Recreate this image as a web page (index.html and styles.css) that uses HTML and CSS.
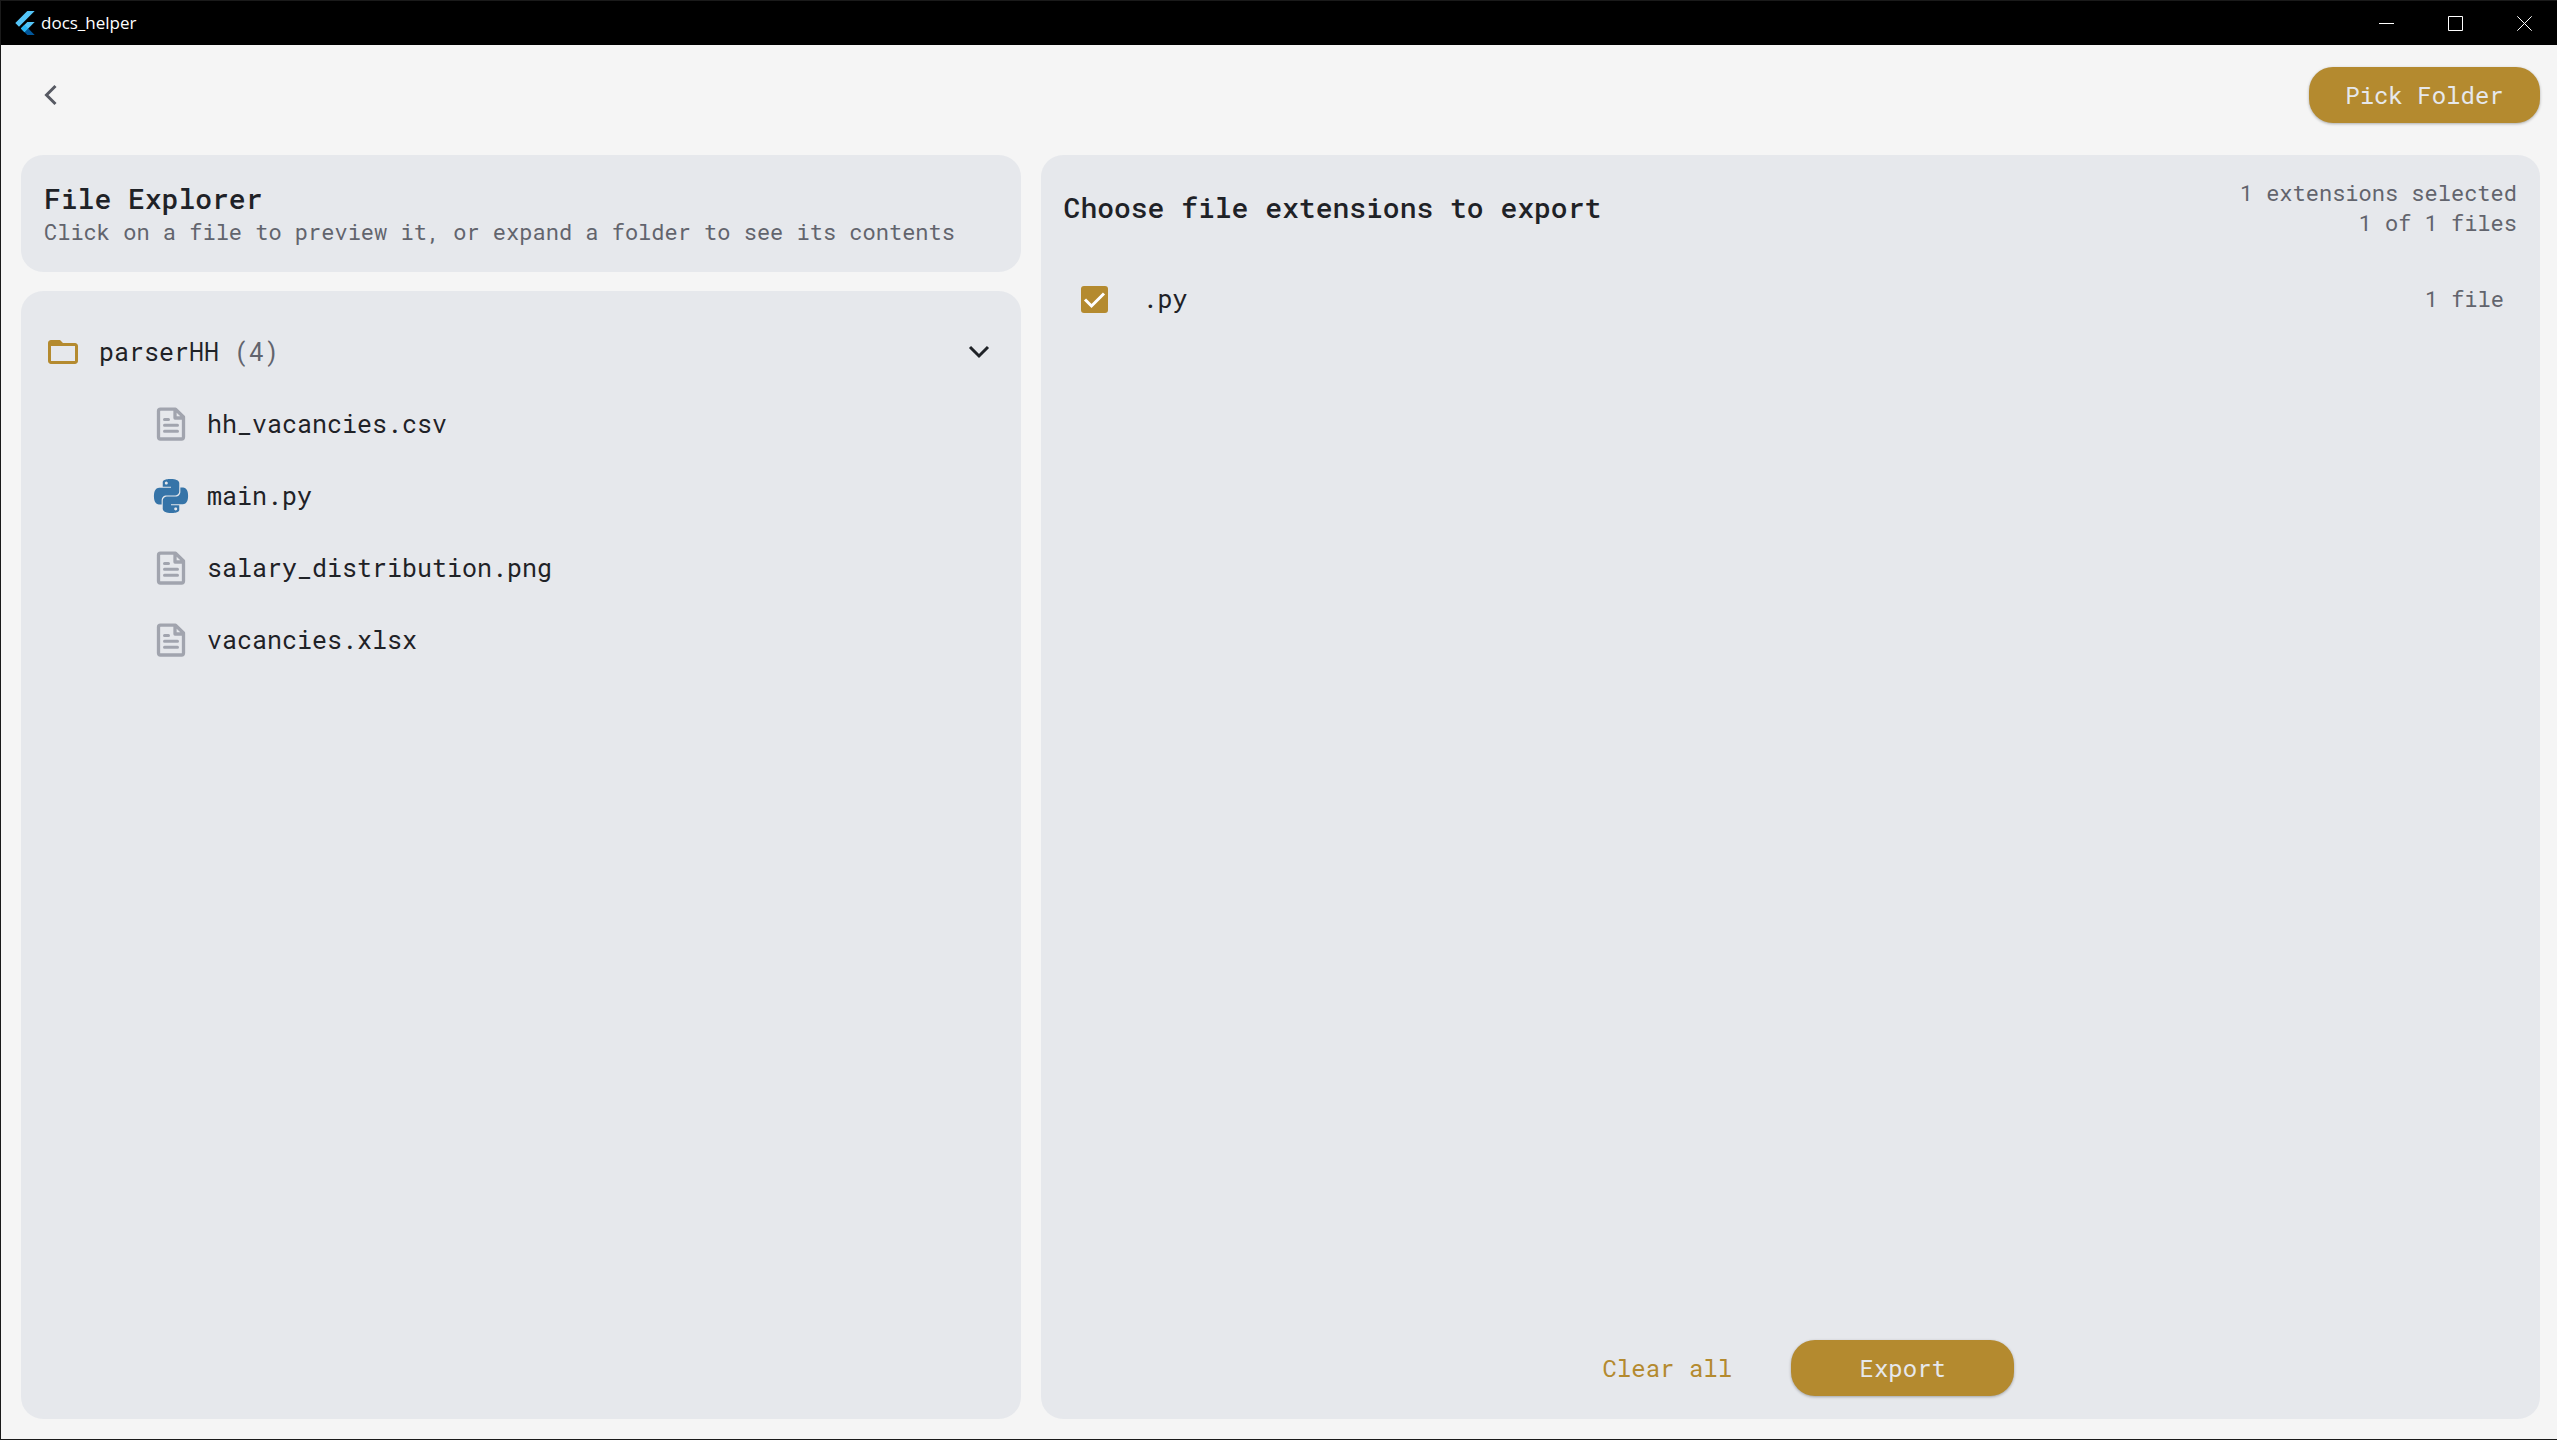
FILE: index.html
```html
<!DOCTYPE html>
<html lang="en">
<head>
<meta charset="utf-8">
<title>docs_helper</title>
<link rel="stylesheet" href="styles.css">
</head>
<body>
<svg class="defs" aria-hidden="true">
  <symbol id="doc" viewBox="0 0 36 36">
    <path d="M7.500 3.200H22.500L30.500 11V31Q30.500 33 28.500 33H7.500Q5.500 33 5.500 31V5.200Q5.500 3.200 7.500 3.200Z M22 3.500V12H30" fill="none" stroke="currentColor" stroke-width="3.300" stroke-linejoin="round"/>
    <path d="M11.500 13.500H15.500M11.500 19.300H24.500M11.500 25.300H24.500" stroke="currentColor" stroke-width="3" stroke-linecap="round"/>
  </symbol>
</svg>
<header class="titlebar">
  <svg class="logo" viewBox="0 0 24 24" aria-hidden="true">
    <path fill="#54c5f8" d="M14.314 0 2.300 12 6 15.700 21.684.013zM14.328 11.072 7.857 17.530l3.700 3.700 10.143-10.158z"/>
    <path fill="#01579b" d="m11.557 21.230 2.770 2.770H21.700l-6.460-6.468z"/>
    <path fill="#29b6f6" d="m7.857 17.530 3.690-3.690 3.693 3.692-3.683 3.698z"/>
  </svg>
  <span class="app-name">docs_helper</span>
  <div class="window-controls">
    <button aria-label="Minimize"><svg viewBox="0 0 15 15"><path d="M0 7.500H15"/></svg></button>
    <button aria-label="Maximize"><svg viewBox="0 0 15 15"><path d="M.5.5H14.500V14.500H.5Z"/></svg></button>
    <button aria-label="Close"><svg viewBox="0 0 15 15"><path d="M.3.3 14.700 14.700M14.700.3.3 14.700"/></svg></button>
  </div>
</header>
<main class="app">
  <nav class="toolbar">
    <button class="back" aria-label="Back"><svg viewBox="0 0 14 22"><path d="M11.500 2 2.500 11l9 9"/></svg></button>
    <button class="btn pick">Pick Folder</button>
  </nav>
  <div class="columns">
    <div class="left">
      <section class="card intro">
        <h1>File Explorer</h1>
        <p>Click on a file to preview it, or expand a folder to see its contents</p>
      </section>
      <section class="card tree">
        <button class="row folder" aria-expanded="true">
          <svg class="icon gold" viewBox="0 0 24 24"><path fill="currentColor" d="M10 4H4c-1.100 0-2 .9-2 2v12c0 1.100.9 2 2 2h16c1.100 0 2-.9 2-2V8c0-1.100-.9-2-2-2h-8l-2-2zM4 8h16v10H4z" fill-rule="evenodd"/></svg>
          <span>parserHH <span class="muted">(4)</span></span>
          <svg class="chevron" viewBox="0 0 22 14"><path d="M2 2l9 9 9-9"/></svg>
        </button>
        <ul>
          <li class="row"><svg class="icon"><use href="#doc"/></svg><span>hh_vacancies.csv</span></li>
          <li class="row"><svg class="icon python" viewBox="-.7 -.7 25.400 25.400"><path fill="currentColor" d="M14.250.18l.9.2.73.26.59.3.45.32.34.34.25.34.16.33.1.3.04.26.02.2-.01.13V8.500l-.05.63-.13.55-.21.46-.26.38-.3.31-.33.25-.35.19-.35.14-.33.1-.3.07-.26.04-.21.02H8.770l-.69.05-.59.14-.5.22-.41.27-.33.32-.27.35-.2.36-.15.37-.1.35-.07.32-.04.27-.02.21v3.060H3.170l-.21-.03-.28-.07-.32-.12-.35-.18-.36-.26-.36-.36-.35-.46-.32-.59-.28-.73-.21-.88-.14-1.050-.05-1.230.06-1.220.16-1.040.24-.87.32-.71.36-.57.4-.44.42-.33.42-.24.4-.16.36-.1.32-.05.24-.01h.16l.06.01h8.160v-.83H6.180l-.01-2.750-.02-.37.05-.34.11-.31.17-.28.25-.26.31-.23.38-.2.44-.18.51-.15.58-.12.64-.1.71-.06.77-.04.84-.02 1.270.05zm-6.300 1.980l-.23.33-.08.41.08.41.23.34.33.22.41.09.41-.09.33-.22.23-.34.08-.41-.08-.41-.23-.33-.33-.22-.41-.09-.41.09zm13.090 3.950l.28.06.32.12.35.18.36.27.36.35.35.47.32.59.28.73.21.88.14 1.040.05 1.230-.06 1.230-.16 1.040-.24.86-.32.71-.36.57-.4.45-.42.33-.42.24-.4.16-.36.09-.32.05-.24.02-.16-.01h-8.220v.82h5.840l.01 2.760.02.36-.05.34-.11.31-.17.29-.25.25-.31.24-.38.2-.44.17-.51.15-.58.13-.64.09-.71.07-.77.04-.84.01-1.270-.04-1.070-.14-.9-.2-.73-.25-.59-.3-.45-.33-.34-.34-.25-.34-.16-.33-.1-.3-.04-.25-.02-.2.01-.13v-5.340l.05-.64.13-.54.21-.46.26-.38.3-.32.33-.24.35-.2.35-.14.33-.1.3-.06.26-.04.21-.02.13-.01h5.840l.69-.05.59-.14.5-.21.41-.28.33-.32.27-.35.2-.36.15-.36.1-.35.07-.32.04-.28.02-.21V6.070h2.090l.14.01zm-6.470 14.250l-.23.33-.08.41.08.41.23.33.33.23.41.08.41-.08.33-.23.23-.33.08-.41-.08-.41-.23-.33-.33-.23-.41-.08-.41.08z"/></svg><span>main.py</span></li>
          <li class="row"><svg class="icon"><use href="#doc"/></svg><span>salary_distribution.png</span></li>
          <li class="row"><svg class="icon"><use href="#doc"/></svg><span>vacancies.xlsx</span></li>
        </ul>
      </section>
    </div>
    <section class="card export">
      <div class="export-head">
        <h2>Choose file extensions to export</h2>
        <div class="summary"><p>1 extensions selected</p><p>1 of 1 files</p></div>
      </div>
      <div class="extension">
        <input type="checkbox" id="ext-py" checked>
        <label for="ext-py">.py</label>
        <span class="count">1 file</span>
      </div>
      <div class="actions">
        <button class="clear">Clear all</button>
        <button class="btn submit">Export</button>
      </div>
    </section>
  </div>
</main>
</body>
</html>
```
FILE: styles.css
```css
* { box-sizing: border-box; }

:root {
  --gold: #b48a2f;
  --ink: #1f2227;
  --muted: #62646d;
  --card: #e6e8ec;
  --edge: #1a1a1a;
}

body {
  margin: 0;
  min-height: 100vh;
  display: flex;
  flex-direction: column;
  background: #f5f5f5;
  color: var(--ink);
  border-left: 1px solid var(--edge);
  border-bottom: 1px solid var(--edge);
  font: 25px/30px "Roboto Mono", "Liberation Mono", monospace;
}

h1, h2, p, ul { margin: 0; padding: 0; }
h1, h2 { font-size: 28px; line-height: 36px; font-weight: 500; }
button { border: 0; padding: 0; background: none; color: inherit; font: inherit; }
.defs { position: absolute; width: 0; height: 0; }

.titlebar {
  height: 45px;
  display: flex;
  align-items: center;
  padding-left: 12px;
  background: #000;
  border-top: 1px solid var(--edge);
  color: #fff;
  font: 17px/24px "Open Sans", sans-serif;
}
.logo { width: 24px; height: 24px; margin-right: 4px; }
.window-controls { margin-left: auto; display: flex; gap: 5px; padding-right: 1px; }
.window-controls button { width: 64px; height: 44px; display: grid; place-items: center; }
.window-controls svg { width: 15px; height: 15px; fill: none; stroke: #fff; }

.app { flex: 1; display: flex; flex-direction: column; padding: 0 17px 20px 20px; }
.toolbar { height: 110px; padding-bottom: 11px; display: flex; align-items: center; justify-content: space-between; }
.back { width: 60px; height: 60px; display: grid; place-items: center; }
.back svg { width: 14px; height: 22px; fill: none; stroke: #575a63; stroke-width: 3; }

.btn {
  height: 56px;
  border-radius: 24px;
  background: var(--gold);
  color: #e6e8ec;
  font-size: 24px;
  box-shadow: 0 1px 3px rgba(0, 0, 0, .3);
}
.pick { width: 231px; }
.submit { width: 223px; }

.columns { flex: 1; display: grid; grid-template-columns: 2fr 3fr; gap: 20px; }
.left { display: flex; flex-direction: column; gap: 19px; }
.card { background: var(--card); border-radius: 22px; }
.intro { height: 117px; padding: 26px 23px; }
.intro p { font-size: 22px; line-height: 30px; color: var(--muted); }

.tree { flex: 1; padding: 25px 24px; }
.tree ul { list-style: none; padding-left: 108px; }
.row { height: 72px; width: 100%; display: flex; align-items: center; gap: 18px; text-align: left; }
.icon { width: 36px; height: 36px; flex: none; color: #a1a4ae; }
.icon.gold { color: var(--gold); }
.icon.python { color: #3674a8; }
.muted { color: var(--muted); }
.chevron { width: 22px; height: 14px; margin: 0 7px 0 auto; fill: none; stroke: var(--ink); stroke-width: 3; }

.export { display: flex; flex-direction: column; padding: 23px; }
.export-head { display: flex; align-items: center; justify-content: space-between; }
.summary, .count { font-size: 22px; color: var(--muted); text-align: right; }
.extension { height: 72px; margin-top: 25px; padding: 0 13px 0 17px; display: flex; align-items: center; }
.extension input {
  appearance: none;
  width: 27px;
  height: 27px;
  margin: 0 35px 0 0;
  border-radius: 3px;
  background: var(--gold) url("data:image/svg+xml,%3Csvg xmlns='http://www.w3.org/2000/svg' viewBox='0 0 27 27'%3E%3Cpath d='M4 13.500l6.500 6.500L23 7.500' fill='none' stroke='white' stroke-width='3'/%3E%3C/svg%3E") center / contain;
}
.count { margin-left: auto; }
.actions { margin-top: auto; display: flex; justify-content: center; gap: 23px; }
.clear { width: 202px; height: 56px; color: var(--gold); font-size: 24px; }
```
